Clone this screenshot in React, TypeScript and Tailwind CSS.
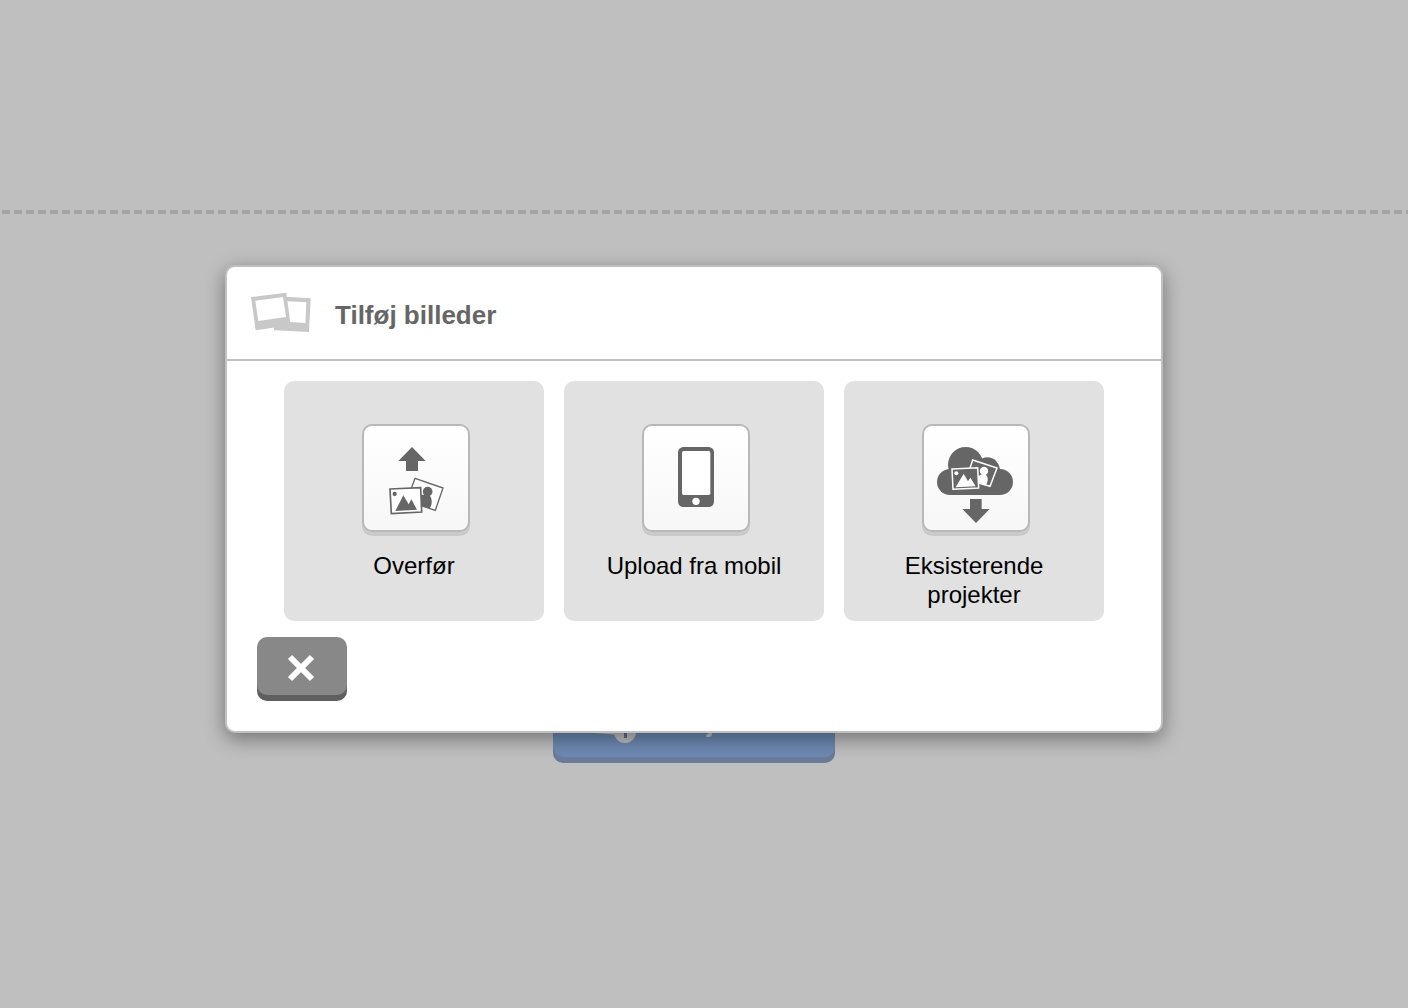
import type { ReactNode } from "react";

function PhotosIcon() {
  return (
    <svg className="h-11 w-[62px] shrink-0" viewBox="90 108 186 132" aria-hidden="true">
      <path fill="#c8c8c8" d="M195 125 272 130 267 231 162 226 162 205Z" />
      <path fill="#fff" d="M200 139 259 142 256 204 200 200Z" />
      <path fill="#c8c8c8" d="M93 126 199 113 212 211 107 226Z" />
      <path fill="#fff" d="M106 137 189 126 198 186 115 198Z" />
    </svg>
  );
}

function UploadIcon() {
  return (
    <svg className="size-full" viewBox="42 33 312 312" fill="#666" aria-hidden="true">
      <path d="M186 96 227 138H204V168H168V138H145Z" />
      <path d="M195 190 279 219 256 286 195 266 180 232Z" fill="#fff" stroke="#666" strokeWidth="4" />
      <circle cx="233" cy="230" r="14.5" />
      <path d="M222 239H237C247 248 248 268 239 280L206 270V240Z" />
      <path d="M120 222 212 218 215 291 124 296Z" fill="#fff" stroke="#666" strokeWidth="5" />
      <circle cx="134" cy="237" r="6.5" />
      <path d="M136 288 160 241 176 268 184 253 201 284Z" />
    </svg>
  );
}

function PhoneIcon() {
  return (
    <svg className="size-full" viewBox="42 33 312 312" aria-hidden="true">
      <rect x="144" y="96" width="108" height="180" rx="16" fill="#666" />
      <rect x="156" y="108" width="85" height="132" rx="5" fill="#fff" />
      <circle cx="198" cy="259" r="11" fill="#fff" />
    </svg>
  );
}

function CloudIcon() {
  return (
    <svg className="size-full" viewBox="42 33 312 312" fill="#666" aria-hidden="true">
      <circle cx="120" cy="201" r="39" />
      <circle cx="167" cy="149" r="53" />
      <circle cx="232" cy="164" r="37" />
      <circle cx="270" cy="201" r="39" />
      <path d="M120 160H270V240H120Z" />
      <path d="M180 252H215V282H239L198 324 157 282H180Z" />
      <path d="M188 135 261 159 240 214 195 201 178 166Z" stroke="#fff" strokeWidth="4.5" />
      <circle cx="222" cy="168" r="12.5" fill="#fff" />
      <path d="M215 178H227C236 188 234 200 228 210L204 203V184Z" fill="#fff" />
      <path d="M126 162 203 158 206 219 129 223Z" stroke="#fff" strokeWidth="4.5" />
      <circle cx="139" cy="175" r="6" fill="#fff" />
      <path d="M137 217 161 176 174 199 181 188 197 214Z" fill="#fff" />
    </svg>
  );
}

function AddPhotosIcon() {
  return (
    <svg className="h-14 w-16 shrink-0" viewBox="0 0 64 56" fill="#c0c0c0" aria-hidden="true">
      <path d="M2 8 38 4 43 41 7 38Z" />
      <circle cx="49" cy="38" r="11" />
      <path d="M48 30H51V36H56V38H51V44H48V38H42V36H48Z" fill="#5b7294" />
    </svg>
  );
}

function SourceTile({ label, children }: { label: string; children: ReactNode }) {
  return (
    <button
      type="button"
      className="flex min-h-60 w-[260px] cursor-pointer flex-col items-center rounded-[10px] bg-[#e1e1e1] px-10 pt-[43px] pb-2"
    >
      <span className="pl-1">
        <span className="block size-27 rounded-[10px] border-2 border-[#b8b8b8] bg-linear-to-b from-white to-[#f7f7f7] shadow-[0_4px_0_#cacaca]">
          {children}
        </span>
      </span>
      <span className="mt-[19px] text-center text-2xl leading-[29px] text-black">{label}</span>
    </button>
  );
}

export default function App() {
  return (
    <div className="relative min-h-screen bg-[#bfbfbf] font-['Liberation_Sans',Arial,sans-serif]">
      <main className="flex flex-col pt-[210px]">
        <div className="h-1 bg-[repeating-linear-gradient(90deg,#bfbfbf_0_2px,#a3a3a3_2px_10px,#bfbfbf_10px_12px)]" />
        <div className="flex justify-center pt-[473px] pr-5">
          <button
            type="button"
            className="flex h-[70px] w-[282px] items-center gap-3 rounded-[10px] bg-[#6e8ab3] pl-[23px] text-[26px] font-bold whitespace-nowrap text-[#c0c0c0] shadow-[0_6px_0_#6a7b99]"
          >
            <AddPhotosIcon />
            <span className="pt-0.5">Tilføj billeder</span>
          </button>
        </div>
      </main>

      <div className="absolute inset-0 flex items-center justify-center pr-5 pb-2.5">
        <section
          role="dialog"
          aria-modal="true"
          aria-labelledby="dialog-title"
          className="w-full max-w-[938px] rounded-[10px] border-2 border-[#c0c0c0] bg-white shadow-[0_6px_20px_rgba(0,0,0,0.4)]"
        >
          <header className="flex h-[94px] items-center gap-[23px] border-b-2 border-[#c0c0c0] px-[23px]">
            <PhotosIcon />
            <h1 id="dialog-title" className="pt-1 text-[26px] leading-8 font-bold text-[#666]">
              Tilføj billeder
            </h1>
          </header>
          <div className="flex flex-wrap justify-center gap-5 pt-5">
            <SourceTile label="Overfør">
              <UploadIcon />
            </SourceTile>
            <SourceTile label="Upload fra mobil">
              <PhoneIcon />
            </SourceTile>
            <SourceTile label="Eksisterende projekter">
              <CloudIcon />
            </SourceTile>
          </div>
          <footer className="px-[30px] pt-4 pb-9">
            <button
              type="button"
              aria-label="Luk"
              className="flex h-[58px] w-[90px] cursor-pointer items-center justify-center rounded-[10px] bg-[#888] shadow-[0_6px_0_#5f5f5f]"
            >
              <svg className="size-8" viewBox="0 0 32 32" aria-hidden="true">
                <path d="M4 7 26 29M26 7 4 29" stroke="#fff" strokeWidth="6" />
              </svg>
            </button>
          </footer>
        </section>
      </div>
    </div>
  );
}
